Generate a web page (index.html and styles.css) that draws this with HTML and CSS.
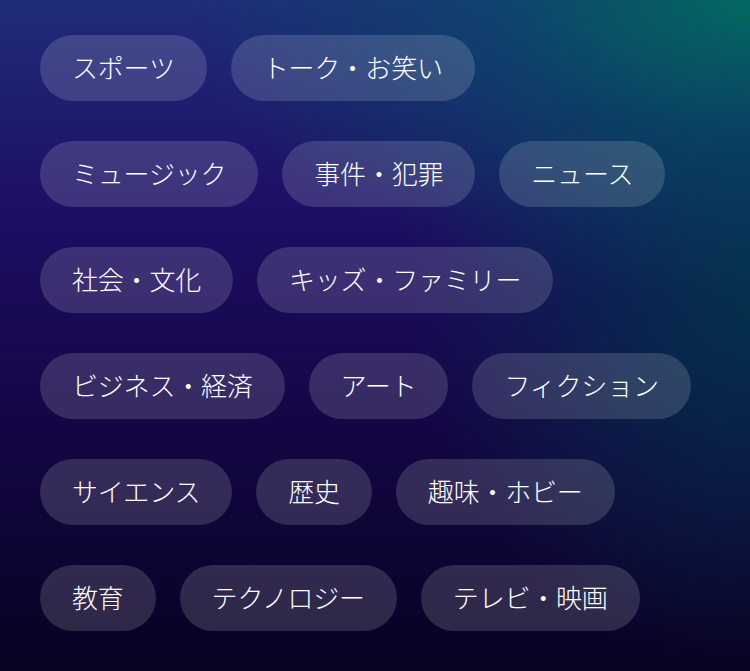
FILE: index.html
```html
<!DOCTYPE html>
<html lang="ja">
<head>
    <meta charset="UTF-8">
    <meta name="viewport" content="width=device-width, initial-scale=1.0">
    <title>カテゴリ</title>
    <link rel="stylesheet" href="styles.css">
</head>
<body>
    <div class="tags">
        <div class="tag-row">
            <span class="tag">スポーツ</span>
            <span class="tag">トーク・お笑い</span>
        </div>
        <div class="tag-row">
            <span class="tag">ミュージック</span>
            <span class="tag">事件・犯罪</span>
            <span class="tag">ニュース</span>
        </div>
        <div class="tag-row">
            <span class="tag">社会・文化</span>
            <span class="tag">キッズ・ファミリー</span>
        </div>
        <div class="tag-row">
            <span class="tag">ビジネス・経済</span>
            <span class="tag">アート</span>
            <span class="tag">フィクション</span>
        </div>
        <div class="tag-row">
            <span class="tag">サイエンス</span>
            <span class="tag">歴史</span>
            <span class="tag">趣味・ホビー</span>
        </div>
        <div class="tag-row">
            <span class="tag">教育</span>
            <span class="tag">テクノロジー</span>
            <span class="tag">テレビ・映画</span>
        </div>
    </div>
</body>
</html>
```

FILE: styles.css
```css
html, body {
    margin: 0;
    padding: 0;
    height: 100%;
}
body {
    font-family: "Noto Sans CJK JP", "Noto Sans", sans-serif;
    color: #fff;
    background:
        radial-gradient(ellipse 75% 45% at 100% 0%, rgba(3, 104, 96, 1) 0%, rgba(3, 85, 100, 0.55) 45%, rgba(3, 60, 90, 0) 100%),
        radial-gradient(ellipse 45% 55% at 100% 45%, rgba(0, 55, 75, 0.85) 0%, rgba(0, 45, 70, 0) 100%),
        linear-gradient(180deg, #1f2c7a 0%, #1d0d63 33%, #150748 60%, #080222 100%);
    overflow: hidden;
}
.tags {
    display: flex;
    flex-direction: column;
    gap: 40px;
    padding: 35px 40px;
}
.tag-row {
    display: flex;
    gap: 24px;
}
.tag {
    box-sizing: border-box;
    height: 66px;
    padding: 0 32px 4px;
    display: flex;
    align-items: center;
    font-size: 26px;
    font-weight: 300;
    letter-spacing: -0.2px;
    border-radius: 33px;
    background: rgba(255, 255, 255, 0.15);
    white-space: nowrap;
}
```
